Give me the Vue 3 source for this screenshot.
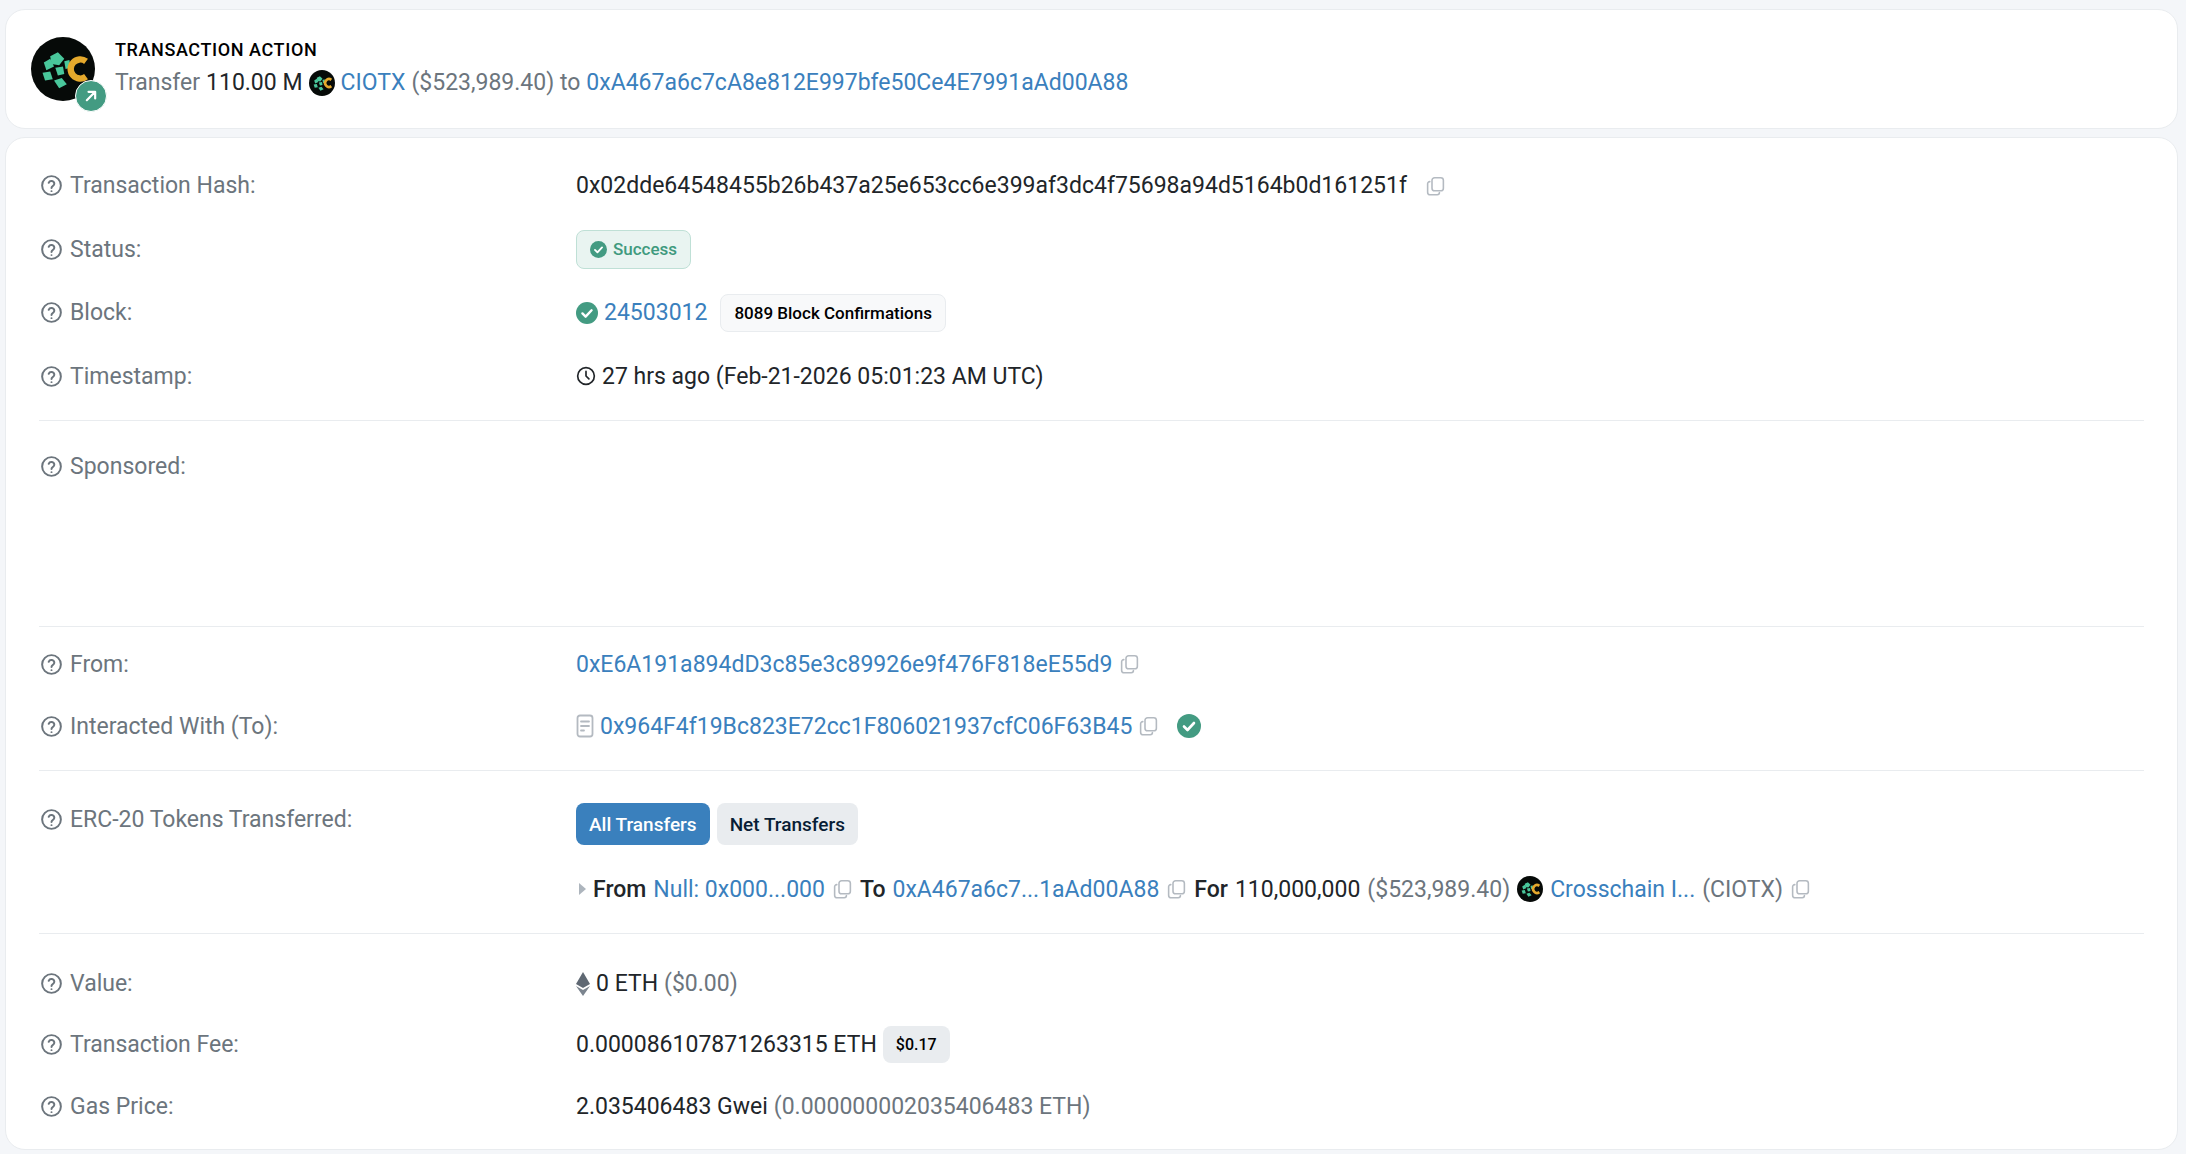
<script setup>
const q = 'M12 21a9 9 0 1 0 0-18 9 9 0 0 0 0 18Z'
const logoShapes = [
  'M30 30 L42 24 L52 34 L44 44 L32 42 Z',
  'M20 40 L30 34 L36 46 L24 52 Z',
  'M38 48 L50 46 L52 58 L42 60 Z',
  'M18 56 L30 54 L34 66 L22 68 Z',
  'M36 68 L48 64 L56 74 L44 80 Z',
  'M52 38 L60 36 L62 48 L54 50 Z',
]
</script>

<template>
  <div class="page">
    <section class="card action">
      <div class="avatar">
        <svg class="logo" viewBox="0 0 100 100">
          <circle cx="50" cy="50" r="50" fill="#060a08" />
          <path v-for="(d, i) in logoShapes" :key="i" :d="d" fill="#49c79b" />
          <path d="M86 38 A15 15 0 1 0 86 62" fill="none" stroke="#e5a92c" stroke-width="10" />
        </svg>
        <span class="badge">
          <svg viewBox="0 0 24 24" width="20" height="20" fill="none" stroke="#fff" stroke-width="2.6" stroke-linecap="round" stroke-linejoin="round">
            <path d="M7 17 17 7M9 7h8v8" />
          </svg>
        </span>
      </div>
      <div class="action-text">
        <div class="action-title">TRANSACTION ACTION</div>
        <div class="line">
          <span class="muted">Transfer</span>
          <span class="dark">110.00 M</span>
          <svg class="logo small" viewBox="0 0 100 100">
            <circle cx="50" cy="50" r="50" fill="#060a08" />
            <path v-for="(d, i) in logoShapes" :key="i" :d="d" fill="#49c79b" />
            <path d="M86 38 A15 15 0 1 0 86 62" fill="none" stroke="#e5a92c" stroke-width="10" />
          </svg>
          <a class="link">CIOTX</a>
          <span class="muted">($523,989.40) to</span>
          <a class="link">0xA467a6c7cA8e812E997bfe50Ce4E7991aAd00A88</a>
        </div>
      </div>
    </section>

    <section class="card details">
      <div class="row r-hash">
        <div class="label"><svg class="help" viewBox="0 0 24 24"><path :d="q" /><path d="M9.3 9.4a2.8 2.8 0 0 1 5.4.9c0 1.9-2.7 2.4-2.7 4" /><path d="M12 17.4h.01" /></svg>Transaction Hash:</div>
        <div class="value">
          <span class="dark">0x02dde64548455b26b437a25e653cc6e399af3dc4f75698a94d5164b0d161251f</span>
          <svg class="copy hash-copy" viewBox="0 0 24 24"><rect x="8" y="2.5" width="13" height="15" rx="3" /><path d="M5.5 7A2.5 2.5 0 0 0 3 9.500V19a3 3 0 0 0 3 3h8a2.500 2.500 0 0 0 2.500-2.500" /></svg>
        </div>
      </div>
      <div class="row">
        <div class="label"><svg class="help" viewBox="0 0 24 24"><path :d="q" /><path d="M9.3 9.4a2.8 2.8 0 0 1 5.4.9c0 1.900-2.700 2.400-2.700 4" /><path d="M12 17.400h.01" /></svg>Status:</div>
        <div class="value">
          <span class="pill success">
            <svg class="check small-check" viewBox="0 0 24 24"><circle cx="12" cy="12" r="12" /><path d="m7 12.500 3.500 3.500L17 9" /></svg>
            Success
          </span>
        </div>
      </div>
      <div class="row">
        <div class="label"><svg class="help" viewBox="0 0 24 24"><path :d="q" /><path d="M9.3 9.4a2.8 2.8 0 0 1 5.4.9c0 1.900-2.700 2.400-2.700 4" /><path d="M12 17.400h.01" /></svg>Block:</div>
        <div class="value">
          <svg class="check" viewBox="0 0 24 24"><circle cx="12" cy="12" r="12" /><path d="m7 12.500 3.500 3.500L17 9" /></svg>
          <a class="link block-link">24503012</a>
          <span class="pill confirm">8089 Block Confirmations</span>
        </div>
      </div>
      <div class="row">
        <div class="label"><svg class="help" viewBox="0 0 24 24"><path :d="q" /><path d="M9.3 9.4a2.8 2.8 0 0 1 5.4.9c0 1.900-2.700 2.400-2.700 4" /><path d="M12 17.400h.01" /></svg>Timestamp:</div>
        <div class="value">
          <svg class="clock" viewBox="0 0 24 24"><circle cx="12" cy="12" r="10" /><path d="M12 6.500V12l3.500 3.500" /></svg>
          <span class="dark">27 hrs ago (Feb-21-2026 05:01:23 AM UTC)</span>
        </div>
      </div>
      <hr class="rule rule-1" />

      <div class="row sponsored">
        <div class="label"><svg class="help" viewBox="0 0 24 24"><path :d="q" /><path d="M9.3 9.4a2.8 2.8 0 0 1 5.4.9c0 1.900-2.700 2.400-2.700 4" /><path d="M12 17.400h.01" /></svg>Sponsored:</div>
        <div class="value"></div>
      </div>
      <hr class="rule" />

      <div class="row r-from">
        <div class="label"><svg class="help" viewBox="0 0 24 24"><path :d="q" /><path d="M9.3 9.4a2.8 2.8 0 0 1 5.4.9c0 1.900-2.700 2.400-2.700 4" /><path d="M12 17.400h.01" /></svg>From:</div>
        <div class="value">
          <a class="link">0xE6A191a894dD3c85e3c89926e9f476F818eE55d9</a>
          <svg class="copy" viewBox="0 0 24 24"><rect x="8" y="2.500" width="13" height="15" rx="3" /><path d="M5.500 7A2.500 2.500 0 0 0 3 9.500V19a3 3 0 0 0 3 3h8a2.500 2.500 0 0 0 2.500-2.500" /></svg>
        </div>
      </div>
      <div class="row r-to">
        <div class="label"><svg class="help" viewBox="0 0 24 24"><path :d="q" /><path d="M9.3 9.4a2.8 2.8 0 0 1 5.4.9c0 1.900-2.700 2.400-2.700 4" /><path d="M12 17.400h.01" /></svg>Interacted With (To):</div>
        <div class="value">
          <svg class="doc" viewBox="0 0 18 24"><rect x="1.500" y="1.500" width="15" height="21" rx="2.500" /><path d="M5 7.500h8M5 12h8M5 16.500h3" /></svg>
          <a class="link">0x964F4f19Bc823E72cc1F806021937cfC06F63B45</a>
          <svg class="copy" viewBox="0 0 24 24"><rect x="8" y="2.500" width="13" height="15" rx="3" /><path d="M5.500 7A2.500 2.500 0 0 0 3 9.500V19a3 3 0 0 0 3 3h8a2.500 2.500 0 0 0 2.500-2.500" /></svg>
          <svg class="check big-check" viewBox="0 0 24 24"><circle cx="12" cy="12" r="12" /><path d="m7 12.500 3.500 3.500L17 9" /></svg>
        </div>
      </div>
      <hr class="rule" />

      <div class="row tokens">
        <div class="label"><svg class="help" viewBox="0 0 24 24"><path :d="q" /><path d="M9.3 9.4a2.8 2.8 0 0 1 5.4.9c0 1.900-2.700 2.400-2.700 4" /><path d="M12 17.400h.01" /></svg>ERC-20 Tokens Transferred:</div>
        <div class="token-col">
          <div class="tabs">
            <span class="tab active">All Transfers</span>
            <span class="tab">Net Transfers</span>
          </div>
          <div class="transfer">
            <span class="caret"></span>
            <b>From</b>
            <a class="link">Null: 0x000...000</a>
            <svg class="copy" viewBox="0 0 24 24"><rect x="8" y="2.500" width="13" height="15" rx="3" /><path d="M5.500 7A2.500 2.500 0 0 0 3 9.500V19a3 3 0 0 0 3 3h8a2.500 2.500 0 0 0 2.500-2.500" /></svg>
            <b>To</b>
            <a class="link">0xA467a6c7...1aAd00A88</a>
            <svg class="copy" viewBox="0 0 24 24"><rect x="8" y="2.500" width="13" height="15" rx="3" /><path d="M5.500 7A2.500 2.500 0 0 0 3 9.500V19a3 3 0 0 0 3 3h8a2.500 2.500 0 0 0 2.500-2.500" /></svg>
            <b>For</b>
            <span class="dark">110,000,000</span>
            <span class="muted">($523,989.40)</span>
            <svg class="logo token-logo" viewBox="0 0 100 100">
              <circle cx="50" cy="50" r="50" fill="#060a08" />
              <path v-for="(d, i) in logoShapes" :key="i" :d="d" fill="#49c79b" />
              <path d="M86 38 A15 15 0 1 0 86 62" fill="none" stroke="#e5a92c" stroke-width="10" />
            </svg>
            <a class="link">Crosschain I...</a>
            <span class="muted">(CIOTX)</span>
            <svg class="copy" viewBox="0 0 24 24"><rect x="8" y="2.500" width="13" height="15" rx="3" /><path d="M5.500 7A2.500 2.500 0 0 0 3 9.500V19a3 3 0 0 0 3 3h8a2.500 2.500 0 0 0 2.500-2.500" /></svg>
          </div>
        </div>
      </div>
      <hr class="rule" />

      <div class="row r-value">
        <div class="label"><svg class="help" viewBox="0 0 24 24"><path :d="q" /><path d="M9.3 9.4a2.8 2.8 0 0 1 5.4.9c0 1.900-2.700 2.400-2.700 4" /><path d="M12 17.400h.01" /></svg>Value:</div>
        <div class="value">
          <svg class="eth" viewBox="0 0 14 24"><path d="M7 0 0 12l7 4 7-4Z" fill="#5f6873" /><path d="m0 14 7 10 7-10-7 4Z" fill="#7c858f" /></svg>
          <span class="dark">0 ETH</span>
          <span class="muted">($0.00)</span>
        </div>
      </div>
      <div class="row r-fee">
        <div class="label"><svg class="help" viewBox="0 0 24 24"><path :d="q" /><path d="M9.3 9.4a2.8 2.8 0 0 1 5.4.9c0 1.900-2.700 2.400-2.700 4" /><path d="M12 17.400h.01" /></svg>Transaction Fee:</div>
        <div class="value">
          <span class="dark">0.000086107871263315 ETH</span>
          <span class="pill price">$0.17</span>
        </div>
      </div>
      <div class="row r-gas">
        <div class="label"><svg class="help" viewBox="0 0 24 24"><path :d="q" /><path d="M9.3 9.4a2.8 2.8 0 0 1 5.4.9c0 1.900-2.700 2.400-2.700 4" /><path d="M12 17.400h.01" /></svg>Gas Price:</div>
        <div class="value">
          <span class="dark">2.035406483 Gwei</span>
          <span class="muted">(0.000000002035406483 ETH)</span>
        </div>
      </div>
    </section>
  </div>
</template>

<style>
html, body { margin: 0; background: #f4f6f9; }
</style>

<style scoped>
.page {
  width: 2186px;
  height: 1154px;
  overflow: hidden;
  box-sizing: border-box;
  padding: 9px 8px 4px 5px;
  display: flex;
  flex-direction: column;
  gap: 8px;
  font-family: Roboto, "Liberation Sans", sans-serif;
  font-size: 23px;
  color: #212529;
}
.card {
  background: #fff;
  border: 1px solid #e9ecef;
  border-radius: 20px;
  box-sizing: border-box;
}
.action {
  height: 120px;
  flex: none;
  display: flex;
  align-items: center;
  padding-left: 25px;
  gap: 20px;
}
.avatar { position: relative; width: 64px; height: 64px; flex: none; margin-top: -1px; }
.logo { display: block; width: 64px; height: 64px; }
.badge {
  position: absolute;
  right: -12px;
  bottom: -11px;
  width: 32px;
  height: 32px;
  border-radius: 50%;
  background: #439b82;
  border: 1px solid #fff;
  box-sizing: border-box;
  display: flex;
  align-items: center;
  justify-content: center;
}
.action-text { display: flex; flex-direction: column; gap: 4px; }
.action-title { font-size: 18px; font-weight: 500; letter-spacing: 0.6px; color: #000; line-height: 24px; }
.line { display: flex; align-items: center; gap: 6px; line-height: 34px; white-space: nowrap; }
.small { width: 26px; height: 26px; }
.muted { color: #6c757d; }
.dark { color: #212529; }
.link { color: #3a80bd; }
.details { flex: 1; padding: 16px 33px 0 33px; }
.row {
  display: grid;
  grid-template-columns: 537px 1fr;
  align-items: center;
  height: 63.500px;
  white-space: nowrap;
}
.label { display: flex; align-items: center; gap: 6px; color: #6c757d; }
.help {
  width: 25px;
  height: 25px;
  flex: none;
  fill: none;
  stroke: #6c757d;
  stroke-width: 1.900;
  stroke-linecap: round;
  stroke-linejoin: round;
}
.value { display: flex; align-items: center; gap: 6px; }
.rule { border: 0; border-top: 1px solid #e9ecef; margin: 0; }
.rule-1 { margin-top: 12px; }
.sponsored { height: 205px; align-items: start; padding-top: 32px; box-sizing: border-box; }
.r-from { margin-top: 6px; height: 62px; }
.r-to { height: 62px; }
.r-to + .rule { margin-top: 13px; }
.copy {
  width: 21px;
  height: 24px;
  flex: none;
  fill: none;
  stroke: #b4bac1;
  stroke-width: 1.800;
  stroke-linecap: round;
  stroke-linejoin: round;
}
.hash-copy { margin-left: 12px; }
.pill {
  display: inline-flex;
  align-items: center;
  box-sizing: border-box;
  border-radius: 8px;
  font-size: 17px;
  font-weight: 500;
}
.success {
  height: 39px;
  padding: 0 13px;
  gap: 6px;
  color: #3f9a7e;
  background: #e9f4f1;
  border: 1px solid #bfe0d6;
}
.check { width: 22px; height: 22px; flex: none; }
.check circle { fill: #439b82; }
.check path { fill: none; stroke: #fff; stroke-width: 2.600; stroke-linecap: round; stroke-linejoin: round; }
.small-check { width: 17px; height: 17px; }
.big-check { width: 24px; height: 24px; margin-left: 12px; }
.confirm {
  height: 38px;
  padding: 0 13px;
  margin-left: 7px;
  color: #000;
  background: #f8f9fa;
  border: 1px solid #e9ecef;
}
.clock { width: 20px; height: 20px; fill: none; stroke: #212529; stroke-width: 2; stroke-linecap: round; flex: none; }
.doc { width: 18px; height: 24px; flex: none; fill: none; stroke: #b4bac1; stroke-width: 1.800; stroke-linecap: round; }
.tokens { height: 162px; align-items: start; }
.tokens .label { padding-top: 35px; }
.token-col { display: flex; flex-direction: column; }
.tabs { display: flex; gap: 7px; padding-top: 32px; }
.tab {
  height: 42px;
  display: flex;
  align-items: center;
  padding: 0 13px;
  border-radius: 8px;
  font-size: 19px;
  font-weight: 500;
  background: #e9ecef;
  color: #081d35;
}
.tab.active { background: #3a80bd; color: #fff; }
.transfer { display: flex; align-items: center; gap: 7px; margin-top: 23px; height: 42px; }
.transfer b { font-weight: 500; }
.caret {
  width: 0;
  height: 0;
  border-left: 7px solid #adb5bd;
  border-top: 6px solid transparent;
  border-bottom: 6px solid transparent;
  margin-left: 3px;
}
.token-logo { width: 26px; height: 26px; }
.r-value { margin-top: 19px; height: 61px; }
.eth { width: 14px; height: 24px; flex: none; }
.r-fee { height: 61px; }
.price {
  height: 37px;
  padding: 0 13px;
  background: #e9ecef;
  color: #000;
  font-size: 16px;
}
.r-gas { height: 63px; }
</style>
